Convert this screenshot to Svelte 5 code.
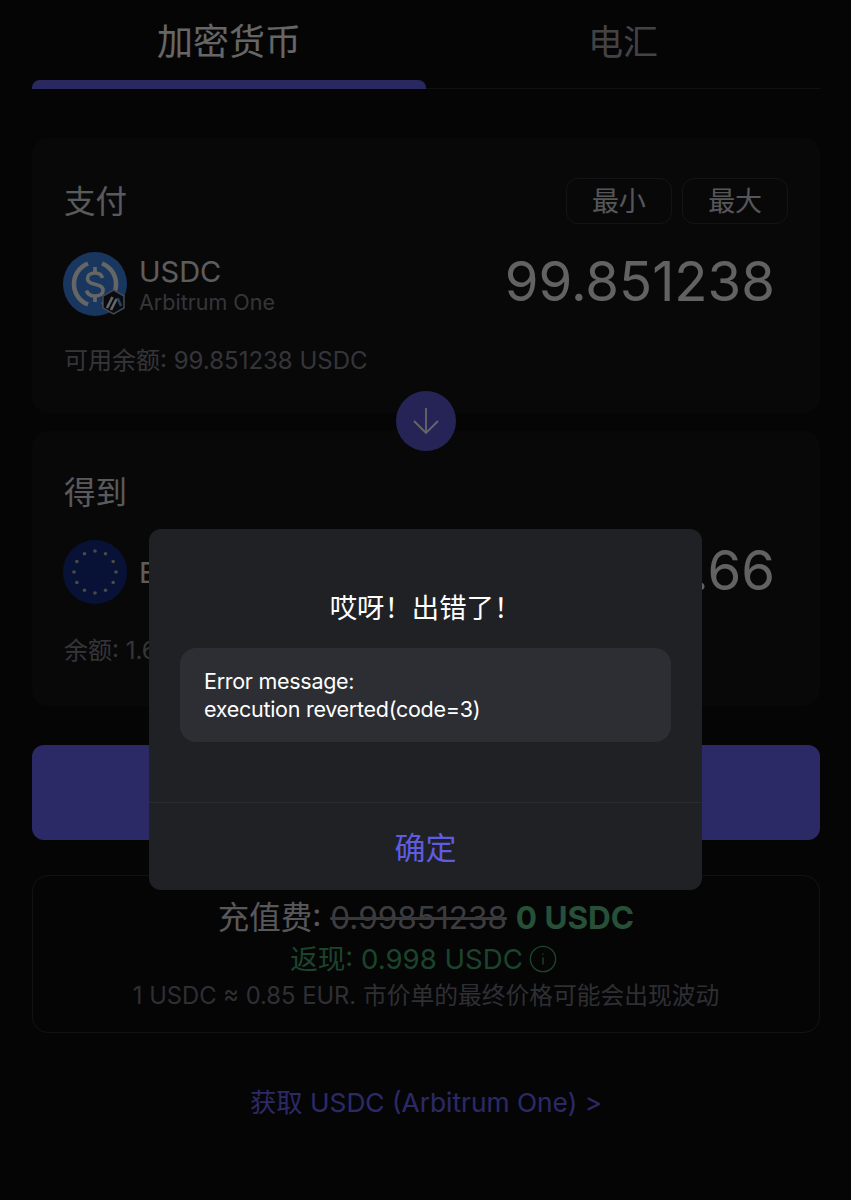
<script>
  const stars = Array.from({ length: 12 }, (_, i) => {
    const a = (i * Math.PI) / 6;
    return { x: 32 + 21 * Math.sin(a), y: 32 - 21 * Math.cos(a) };
  });
</script>

<div class="page">
  <nav class="tabs">
    <div class="tab active">加密货币</div>
    <div class="tab">电汇</div>
  </nav>

  <div class="swap">
    <section class="card">
      <div class="row head">
        <span class="label">支付</span>
        <div class="pills">
          <button class="pill">最小</button>
          <button class="pill">最大</button>
        </div>
      </div>
      <div class="row asset">
        <div class="token">
          <svg class="icon" viewBox="0 0 64 64" width="64" height="64">
            <circle cx="32" cy="32" r="32" fill="#4088ee" />
            <path d="M25 11.500a22 22 0 0 0 0 41M39 11.500a22 22 0 0 1 0 41" fill="none" stroke="#fff" stroke-width="4.500" />
            <path d="M39.500 26c-1-3.500-4-5-7.500-5-4.500 0-7.500 2-7.500 5.500 0 4 3.500 5 7.500 5.800 4.300.8 8 1.800 8 6 0 3.800-3.500 5.700-8 5.700-4.300 0-7.500-1.700-8.500-5.500" fill="none" stroke="#fff" stroke-width="3.600" />
            <path d="M32 15v6M32 45v5" stroke="#fff" stroke-width="3.600" />
            <path d="M50.500 38l10.500 6v12l-10.500 6L40 56V44z" fill="#141c2a" stroke="#aab4c2" stroke-width="1.500" />
            <path d="M44 56l5.500-11M48 58l5.500-11" stroke="#fff" stroke-width="2.600" />
            <path d="M54.500 46l3.500 8" stroke="#5aa8e8" stroke-width="2.600" />
          </svg>
          <div class="names">
            <div class="sym">USDC</div>
            <div class="net">Arbitrum One</div>
          </div>
        </div>
        <div class="amount">99.851238</div>
      </div>
      <div class="bal">可用余额: 99.851238 USDC</div>
    </section>

    <div class="flip">
      <svg viewBox="0 0 30 30" width="30" height="30">
        <path d="M15 2v25M3 15l12 12 12-12" fill="none" stroke="#fff" stroke-width="1.800" />
      </svg>
    </div>

    <section class="card second">
      <div class="row head">
        <span class="label">得到</span>
      </div>
      <div class="row asset">
        <div class="token">
          <svg class="icon" viewBox="0 0 64 64" width="64" height="64">
            <circle cx="32" cy="32" r="32" fill="#162e8a" />
            {#each stars as s}
              <circle cx={s.x} cy={s.y} r="1.800" fill="#b8b8a8" />
            {/each}
          </svg>
          <div class="names">
            <div class="sym">EUR</div>
          </div>
        </div>
        <div class="amount">84.66</div>
      </div>
      <div class="bal">余额: 1.66 EUR</div>
    </section>
  </div>

  <button class="cta">兑换</button>

  <section class="fee">
    <div class="f1">充值费: <s>0.99851238</s> <b>0 USDC</b></div>
    <div class="f2">
      返现: 0.998 USDC
      <svg viewBox="0 0 20 20" width="28" height="28">
        <circle cx="10" cy="10" r="9" fill="none" stroke="currentColor" stroke-width="1" />
        <path d="M10 9v5M10 6v1" stroke="currentColor" stroke-width="1" />
      </svg>
    </div>
    <div class="f3">1 USDC ≈ 0.85 EUR. 市价单的最终价格可能会出现波动</div>
  </section>

  <a class="link" href="#top">获取 USDC (Arbitrum One) &gt;</a>

  <div class="scrim"></div>

  <div class="modal">
    <h2>哎呀！出错了！</h2>
    <div class="msg">Error message:<br />execution reverted(code=3)</div>
    <button class="ok">确定</button>
  </div>
</div>

<style>
  :global(body) {
    margin: 0;
    background: #0d0d11;
  }
  .page {
    position: relative;
    height: 1200px;
    overflow: hidden;
    padding: 0 31px 0 32px;
    box-sizing: border-box;
    color: #fff;
    font-family: Inter, "Noto Sans CJK SC", sans-serif;
  }
  .tabs {
    display: flex;
    height: 89px;
    border-bottom: 1px solid #2c2c33;
    box-sizing: border-box;
  }
  .tab {
    flex: 1;
    text-align: center;
    font-size: 35px;
    font-weight: 400;
    line-height: 84px;
    color: #a8a8b0;
    position: relative;
  }
  .tab.active {
    color: #fff;
    font-size: 36px;
  }
  .tab.active::after {
    content: "";
    position: absolute;
    left: 0;
    right: 0;
    bottom: -1px;
    height: 9px;
    border-radius: 8px 8px 0 0;
    background: #6a65f0;
  }
  .swap {
    position: relative;
    margin-top: 49px;
    display: flex;
    flex-direction: column;
    gap: 18px;
  }
  .card {
    background: #141418;
    border-radius: 16px;
    height: 275px;
    padding: 40px 32px 0 32px;
    box-sizing: border-box;
  }
  .card.second {
    padding-top: 38px;
  }
  .row {
    display: flex;
    justify-content: space-between;
    align-items: center;
  }
  .head {
    height: 46px;
  }
  .label {
    margin-top: 2px;
    font-size: 31.500px;
    line-height: 42px;
    color: #e2e2e6;
  }
  .pills {
    display: flex;
    gap: 10.500px;
  }
  .pill {
    width: 105.750px;
    height: 46px;
    border: 1px solid #33333b;
    border-radius: 12px;
    background: transparent;
    color: #d8d8de;
    font: inherit;
    font-size: 27px;
    line-height: 40px;
    padding: 2px 0 0;
  }
  .asset {
    margin-top: 28px;
    height: 64px;
    padding-right: 13px;
  }
  .second .asset {
    margin-top: 25px;
  }
  .token {
    display: flex;
    align-items: center;
    gap: 12px;
    margin-left: -1px;
  }
  .icon {
    display: block;
    overflow: visible;
  }
  .sym {
    font-size: 29px;
    line-height: 35px;
    color: #e8e8ec;
  }
  .net {
    font-size: 21.500px;
    line-height: 26px;
    color: #85858e;
  }
  .amount {
    font-size: 54.500px;
    line-height: 64px;
    margin-bottom: 6px;
    color: #f4f4f6;
  }
  .second .amount {
    margin-bottom: 4px;
  }
  .bal {
    margin-top: 27px;
    font-size: 24px;
    line-height: 36px;
    color: #85858e;
  }
  .second .bal {
    margin-top: 29px;
  }
  .flip {
    position: absolute;
    left: 364px;
    top: 253px;
    width: 60px;
    height: 60px;
    border-radius: 50%;
    background: #5f5bd8;
    display: flex;
    align-items: center;
    justify-content: center;
  }
  .cta {
    display: block;
    width: 100%;
    height: 95px;
    margin-top: 39px;
    border: 0;
    border-radius: 12px;
    background: #6e69ff;
    color: #fff;
    font: inherit;
    font-size: 30px;
  }
  .fee {
    margin-top: 35px;
    height: 158px;
    border: 1px solid #2f2f37;
    border-radius: 16px;
    box-sizing: border-box;
    padding-top: 21px;
    text-align: center;
  }
  .f1 {
    font-size: 31.500px;
    line-height: 42px;
    color: #dcdce0;
  }
  .f1 s {
    color: #9a9aa2;
    text-decoration-thickness: 3px;
    text-decoration-color: #8e8e96;
  }
  .f1 b {
    color: #5fc88a;
    font-weight: 700;
  }
  .f2 {
    margin-top: 1px;
    padding-right: 5px;
    font-size: 27.600px;
    line-height: 38px;
    color: #45ab6e;
    display: flex;
    justify-content: center;
    align-items: center;
    gap: 6px;
  }
  .f3 {
    font-size: 23.750px;
    line-height: 36px;
    color: #76767f;
  }
  .link {
    display: block;
    margin-top: 50px;
    text-align: center;
    font-size: 26.300px;
    line-height: 40px;
    color: #6e69ff;
    text-decoration: none;
  }
  .scrim {
    position: absolute;
    inset: 0;
    background: rgba(0, 0, 0, 0.6);
  }
  .modal {
    position: absolute;
    left: 149px;
    top: 529px;
    width: 553px;
    height: 361px;
    background: #202125;
    border-radius: 12px;
    display: flex;
    flex-direction: column;
    box-sizing: border-box;
  }
  h2 {
    margin: 60px 0 0;
    font-size: 27.400px;
    line-height: 38px;
    font-weight: 400;
    text-align: center;
    color: #fff;
  }
  .msg {
    margin: 21px 31px 0 31px;
    height: 94px;
    padding: 19px 24px 0;
    box-sizing: border-box;
    background: #2d2e33;
    border-radius: 16px;
    font-size: 21.500px;
    line-height: 28px;
    letter-spacing: -0.28px;
    color: #fff;
  }
  .ok {
    margin-top: 60px;
    flex: 1;
    border: 0;
    border-top: 1px solid #2a2b30;
    background: transparent;
    color: #5f5ce0;
    font: inherit;
    font-size: 31px;
    line-height: 40px;
    padding: 2px 0 0;
  }
</style>
